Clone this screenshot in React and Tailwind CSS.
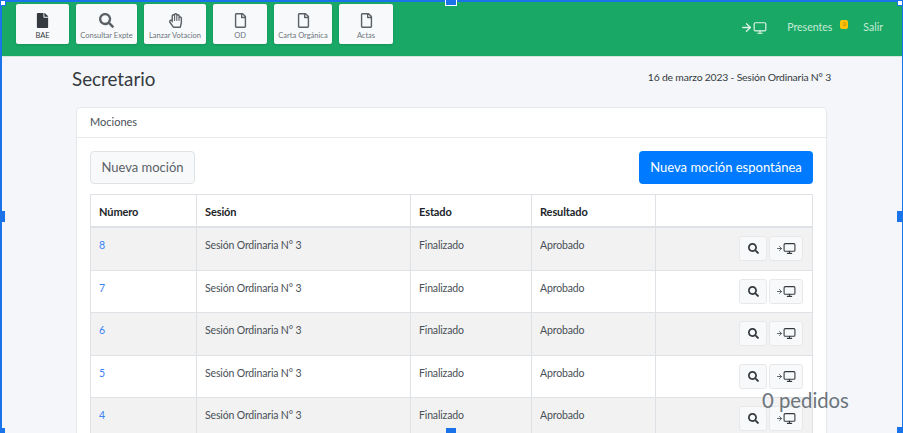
import React from "react";
import { FaFile, FaRegFile, FaSearch, FaRegHandPaper } from "react-icons/fa";
import { ArrowRight, Monitor } from "lucide-react";

const font = { fontFamily: 'Lato, "Noto Sans", sans-serif' };

const tools = [
  { label: "BAE", icon: FaFile, w: "w-[53px]", dark: true },
  { label: "Consultar Expte", icon: FaSearch, w: "w-[61px]" },
  { label: "Lanzar Votacion", icon: FaRegHandPaper, w: "w-[62px]" },
  { label: "OD", icon: FaRegFile, w: "w-[54px]" },
  { label: "Carta Orgánica", icon: FaRegFile, w: "w-[58px]" },
  { label: "Actas", icon: FaRegFile, w: "w-[54px]" },
];

const rows = [8, 7, 6, 5, 4];

function ToolButton({ label, icon: Icon, w, dark }) {
  return (
    <button className={`${w} h-[40px] shrink-0 rounded-[2px] bg-[#f8f9fa] flex flex-col items-center pt-[9px] shadow-sm`}>
      <Icon className={`h-[15px] w-[15px] ${dark ? "text-[#343a40]" : "text-[#5a6268]"}`} />
      <span className={`mt-[2px] text-[7.5px] leading-[11px] whitespace-nowrap ${dark ? "text-[#343a40]" : "text-[#6c757d]"}`}>{label}</span>
    </button>
  );
}

function Row({ n, striped }) {
  return (
    <div className={`flex h-[42.6px] border-b border-[#dee2e6] text-[10.5px] tracking-[-0.15px] text-[#495057] ${striped ? "bg-[#f2f2f2]" : "bg-white"}`}>
      <div className="w-[106px] border-r border-[#dee2e6] pl-[8px] pt-[10px] text-[#3b82f6]">{n}</div>
      <div className="w-[214px] border-r border-[#dee2e6] pl-[8px] pt-[10px]">Sesión Ordinaria N° 3</div>
      <div className="w-[121px] border-r border-[#dee2e6] pl-[8px] pt-[10px]">Finalizado</div>
      <div className="w-[124px] border-r border-[#dee2e6] pl-[8px] pt-[10px]">Aprobado</div>
      <div className="flex-1 flex justify-end gap-[2px] pr-[9px] pt-[8px]">
        <button className="h-[25px] w-[28px] rounded-[3px] border border-[#e6e8ea] bg-[#f8f9fa] flex items-center justify-center">
          <FaSearch className="h-[11px] w-[11px] text-[#343a40]" />
        </button>
        <button className="h-[25px] w-[34px] rounded-[3px] border border-[#e6e8ea] bg-[#f8f9fa] flex items-center justify-center">
          <ArrowRight className="h-[7px] w-[7px] text-[#495057]" strokeWidth={3} />
          <Monitor className="h-[13px] w-[13px] text-[#343a40]" />
        </button>
      </div>
    </div>
  );
}

export default function App() {
  return (
    <div className="relative h-[433px] w-[903px] overflow-hidden bg-[#f4f6fa]" style={font}>
      <nav className="flex h-[57px] items-start bg-[#19a866] border-b border-[#d5e8dd] pl-[16px] pt-[4px]">
        <div className="flex gap-[7px]">
          {tools.map((t) => (
            <ToolButton key={t.label} {...t} />
          ))}
        </div>
        <div className="ml-auto flex items-center text-[10.5px] text-[#c6ebd7] pt-[16px] pr-[20px]">
          <ArrowRight className="h-[13px] w-[13px] text-[#dff3e8]" strokeWidth={2.5} />
          <Monitor className="h-[14px] w-[14px] text-[#dff3e8]" />
          <span className="ml-[20px]">Presentes</span>
          <span className="ml-[8px] -mt-[7px] flex h-[9px] w-[8px] items-center justify-center rounded-[2px] bg-[#ffc107] text-[5px] text-[#a17a00]">0</span>
          <span className="ml-[15px]">Salir</span>
        </div>
      </nav>

      <div className="flex items-start justify-between pl-[72px] pr-[72px] pt-[9px]">
        <h1 className="text-[18.8px] leading-[26px] text-[#343a40]">Secretario</h1>
        <span className="pt-[4px] text-[10.4px] tracking-[-0.2px] text-[#343a40]">16 de marzo 2023 - Sesión Ordinaria N° 3</span>
      </div>

      <div className="ml-[76px] mt-[15px] w-[751px] rounded-[4px] border border-[#e6e8ec] bg-white">
        <div className="h-[30px] border-b border-[#e6e8ec] pl-[13px] pt-[6px] text-[11px] text-[#495057]">Mociones</div>
        <div className="px-[13px] pt-[13px]">
          <div className="flex items-center justify-between">
            <button className="h-[33px] w-[105px] rounded-[4px] border border-[#e0e3e6] bg-[#f8f9fa] text-[13px] text-[#5a6268]">Nueva moción</button>
            <button className="h-[33px] w-[174px] rounded-[4px] bg-[#007bff] text-[13px] text-white">Nueva moción espontánea</button>
          </div>
          <div className="mt-[10px] border border-[#dee2e6]">
            <div className="flex h-[33px] border-b-2 border-[#dee2e6] text-[11px] tracking-[-0.1px] font-bold text-[#212529]">
              <div className="w-[106px] border-r border-[#dee2e6] pl-[8px] pt-[9px]">Número</div>
              <div className="w-[214px] border-r border-[#dee2e6] pl-[8px] pt-[9px]">Sesión</div>
              <div className="w-[121px] border-r border-[#dee2e6] pl-[8px] pt-[9px]">Estado</div>
              <div className="w-[124px] border-r border-[#dee2e6] pl-[8px] pt-[9px]">Resultado</div>
              <div className="flex-1" />
            </div>
            {rows.map((n, i) => (
              <Row key={n} n={n} striped={i % 2 === 0} />
            ))}
          </div>
        </div>
      </div>

      <div className="absolute left-[762px] top-[386px] text-[20.3px] leading-[28px] text-[#6c757d]">0 pedidos</div>

      <div className="absolute inset-0 border-t-[2px] border-l-[2px] border-r-[1px] border-[#1a73e8] pointer-events-none" />
      <div className="absolute left-0 top-0 h-[6px] w-[6px] border border-[#1a73e8] bg-white" />
      <div className="absolute left-[445px] top-0 h-[6px] w-[12px] border-x border-b border-white bg-[#1a73e8]" />
      <div className="absolute left-[897px] top-0 h-[6px] w-[6px] border border-[#1a73e8] bg-white" />
      <div className="absolute left-0 top-[211px] h-[11px] w-[5px] bg-[#1a73e8]" />
      <div className="absolute left-[897px] top-[211px] h-[11px] w-[6px] bg-[#1a73e8]" />
      <div className="absolute left-[446px] top-[428px] h-[5px] w-[10px] bg-[#1a73e8]" />
      <div className="absolute left-0 top-[428px] h-[5px] w-[5px] bg-[#1a73e8]" />
      <div className="absolute left-[897px] top-[427px] h-[6px] w-[6px] bg-[#1a73e8]" />
    </div>
  );
}
